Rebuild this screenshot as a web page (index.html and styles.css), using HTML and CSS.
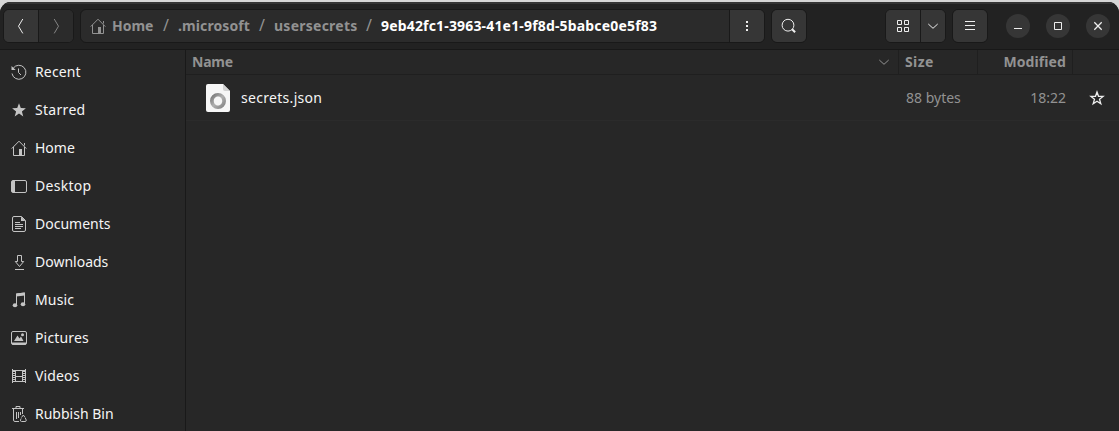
FILE: index.html
```html
<!DOCTYPE html>
<html lang="en">
<head>
<meta charset="utf-8">
<title>Files</title>
<link rel="stylesheet" href="styles.css">
</head>
<body>
<div class="window">
  <header class="bar">
    <div class="group nav">
      <button class="btn back"><svg width="16" height="16" viewBox="0 0 16 16"><path class="ln" d="M9.800 1L5.500 8.200L9.800 15.400"/></svg></button>
      <button class="btn fwd"><svg width="16" height="16" viewBox="0 0 16 16"><path class="ln" d="M6.200 1L10.500 8.200L6.200 15.400"/></svg></button>
    </div>
    <div class="group path">
      <div class="crumbs">
        <svg class="home" width="16" height="16" viewBox="0 0 16 16"><path class="ln" d="M.7 8.600L8 1.200L15.300 8.600M2.500 7V15.500H13.500V7M13.500 5.500V3"/><path class="fl" d="M8 9h3v6H8z"/></svg>
        <span class="c1">Home</span><i class="s1">/</i><span class="c2">.microsoft</span><i class="s2">/</i><span class="c3">usersecrets</span><i class="s3">/</i><span class="c4">9eb42fc1-3963-41e1-9f8d-5babce0e5f83</span>
      </div>
      <button class="btn more"><svg width="16" height="16" viewBox="0 0 16 16"><path class="fl" d="M7 3h2v2H7zM7 7h2v2H7zM7 11h2v2H7z"/></svg></button>
    </div>
    <div class="group search"><button class="btn"><svg width="16" height="16" viewBox="0 0 16 16"><circle class="ln" cx="7" cy="7.200" r="5.900"/><path class="ln thick" d="M11.100 11.300L14.100 14.300"/></svg></button></div>
    <div class="group view">
      <button class="btn grid"><svg width="16" height="16" viewBox="0 0 16 16"><path class="ln" d="M2.500 2.500h4v4h-4zM9.500 2.500h4v4h-4zM2.500 9.500h4v4h-4zM9.500 9.500h4v4h-4z"/></svg></button>
      <button class="btn drop"><svg width="16" height="16" viewBox="0 0 16 16"><path class="ln" d="M3.300 6L8 10.300L12.700 6"/></svg></button>
    </div>
    <div class="group menu"><button class="btn"><svg width="16" height="16" viewBox="0 0 16 16"><path class="ln" d="M3 3.500h10M3 7.500h10M3 11.500h10"/></svg></button></div>
    <div class="controls">
      <button class="round"><svg width="16" height="16" viewBox="0 0 16 16"><path class="ln" d="M4 10.500h8"/></svg></button>
      <button class="round"><svg width="16" height="16" viewBox="0 0 16 16"><path class="ln" d="M4.500 4.500h7v7h-7z"/></svg></button>
      <button class="round"><svg width="16" height="16" viewBox="0 0 16 16"><path class="ln mid" d="M4.300 4.300l7.400 7.400M11.700 4.300l-7.400 7.400"/></svg></button>
    </div>
  </header>
  <div class="body">
    <nav class="side">
      <a><svg width="16" height="16" viewBox="0 0 16 16"><path class="ln" d="M2.200 4.200A7 7 0 1 1 1 9.500M7.500 4.500V8.500L10 11"/><path class="fl" d="M.5 2v4h4.200z"/></svg><span class="t-recent">Recent</span></a>
      <a><svg width="16" height="16" viewBox="0 0 16 16"><path class="fl" d="M8 1.200l1.800 4.800 5.100.2-4 3.200 1.400 5L8 11.600l-4.300 2.800 1.400-5-4-3.200 5.100-.2z"/></svg><span class="t-starred">Starred</span></a>
      <a><svg width="16" height="16" viewBox="0 0 16 16"><path class="ln" d="M.7 8.600L8 1.200L15.300 8.600M2.500 7V15.500H13.500V7M13.500 5.500V3"/><path class="fl" d="M8 9h3v6H8z"/></svg><span class="t-home">Home</span></a>
      <a><svg width="16" height="16" viewBox="0 0 16 16"><rect class="ln" x=".5" y="2.500" width="15" height="12" rx="1.500"/><path class="fl" d="M1 3h3v11H1z"/></svg><span class="t-desktop">Desktop</span></a>
      <a><svg width="16" height="16" viewBox="0 0 16 16"><path class="ln" d="M3 .5h7.500l4 4V14q0 1.500-1.500 1.500H3Q1.500 15.500 1.500 14V2Q1.500 .5 3 .5zM4 6.500h5M4 8.500h8M4 10.500h8M4 12.500h6"/><path class="fl" d="M10 .5v4.500h4.500z"/></svg><span class="t-documents">Documents</span></a>
      <a><svg width="16" height="16" viewBox="0 0 16 16"><path class="ln" d="M6.500 1.500h4v6h2.200L8.500 12.500L4.300 7.500h2.200zM4 15.500h9"/></svg><span class="t-downloads">Downloads</span></a>
      <a><svg width="16" height="16" viewBox="0 0 16 16"><path class="ln" d="M5.500 13V2L13.500 1V12"/><path class="fl" d="M5 1.500L14 .5V3.500L5 4.500z"/><ellipse class="fl" cx="4" cy="13.300" rx="2.300" ry="2"/><ellipse class="fl" cx="12" cy="12.300" rx="2.300" ry="2"/></svg><span class="t-music">Music</span></a>
      <a><svg width="16" height="16" viewBox="0 0 16 16"><rect class="ln" x=".5" y="1.500" width="15" height="13" rx="1.500"/><path class="fl" d="M1 12.500h14v2H1zM3 11l3.500-5.500 2 3 1.500-2 2.500 4.500z"/><circle class="fl" cx="11.500" cy="4.800" r="1.500"/></svg><span class="t-pictures">Pictures</span></a>
      <a><svg width="16" height="16" viewBox="0 0 16 16"><path class="ln" d="M1.500 1v14M14.500 1v14M4.500 2v12M11.500 2v12M1 2.500h14M1 13.500h14M4 8.500h8"/><path class="ln dots" d="M3 3v11M13 3v11"/></svg><span class="t-videos">Videos</span></a>
      <a><svg width="16" height="16" viewBox="0 0 16 16"><path class="ln" d="M1 2.500h12M5 2V.5h4V2M2.500 3v11q0 1.500 1.500 1.500h4M11.500 3v5M5.500 6v7M7.500 6v6M9.500 6v3"/><path class="ln" d="M10.500 11.500l1.800-2.500 1.800 2.500M14.300 12l1 2.200q0 1.300-1.300 1.300h-3.500q-1.600-.3-1-1.600l.7-1.400"/></svg><span class="t-bin">Rubbish Bin</span></a>
    </nav>
    <main class="list">
      <div class="head">
        <div class="h-name"><span class="t-name">Name</span><svg width="16" height="16" viewBox="0 0 16 16"><path class="ln" d="M3.300 6L8 10.300L12.700 6"/></svg></div>
        <div class="h-size"><span class="t-size">Size</span></div>
        <div class="h-mod"><span class="t-mod">Modified</span></div>
        <div class="h-star"></div>
      </div>
      <div class="row">
        <svg class="file" width="24" height="28" viewBox="0 0 24 28"><defs><linearGradient id="g" x1="0" y1="0" x2="1" y2="1"><stop offset="0" stop-color="#666"/><stop offset=".5" stop-color="#b0b0b0"/><stop offset="1" stop-color="#777"/></linearGradient></defs><path fill="#f6f6f6" d="M2 0H17L24 7V26Q24 28 22 28H2Q0 28 0 26V2Q0 0 2 0z"/><path fill="#d2d2d2" d="M17 0V5Q17 7 19 7H24z"/><path fill="url(#g)" fill-rule="evenodd" d="M12 9a8 8 0 1 0 0 16a8 8 0 1 0 0-16zM12 12.500c3 0 4.200 2.500 4.200 4.500s-1.200 4.500-4.200 4.500-4.200-2.500-4.200-4.500 1.200-4.500 4.200-4.500z"/></svg>
        <span class="fname"><span class="t-file">secrets.json</span></span>
        <span class="fsize"><span class="t-bytes">88 bytes</span></span>
        <span class="fmod"><span class="t-time">18:22</span></span>
        <svg class="star" width="16" height="16" viewBox="0 0 16 16"><path class="ln mid" d="M8 2l1.500 4.300 4.600.1-3.600 2.900 1.300 4.500L8 11.200l-3.800 2.600 1.300-4.500L1.900 6.400l4.600-.1z"/></svg>
      </div>
    </main>
  </div>
</div>
</body>
</html>
```
FILE: styles.css
```css
* { box-sizing: border-box; }
body {
  margin: 0;
  height: 431px;
  padding-top: 2px;
  overflow: hidden;
  background: #d6d6d6;
  font-family: "Noto Sans", "Open Sans", sans-serif;
  font-size: 14px;
  color: #f5f5f5;
}
svg { display: block; flex: none; }
.ln { fill: none; stroke: currentColor; stroke-width: 1; }
.mid { stroke-width: 1.3; }
.thick { stroke-width: 2; }
.dots { stroke-dasharray: 1 1; stroke-width: 2; }
.fl { fill: currentColor; }
span, i { white-space: nowrap; }
.window {
  height: 429px;
  display: flex;
  flex-direction: column;
  overflow: hidden;
  border-radius: 11px 11px 0 0;
  background: #272727;
}
.bar {
  flex: none;
  height: 48px;
  padding: 5px 9px 0 3px;
  display: flex;
  border-top: 2px solid #353535;
  border-bottom: 1px solid #181818;
  background: #222;
}
.group {
  display: flex;
  height: 34px;
  border: 1px solid #191919;
  border-radius: 6px;
  overflow: hidden;
  background: #363636;
}
button {
  font: inherit;
  color: #eee;
  border: 0;
  padding: 0;
  background: #363636;
  display: flex;
  align-items: center;
  justify-content: center;
}
.btn { flex: 1; }
.nav { width: 71px; }
.fwd { color: #858585; background: #2b2b2b; border-left: 1px solid #191919; }
.path { width: 685px; margin-left: 6px; background: #2b2b2b; }
.crumbs {
  flex: 1;
  display: flex;
  align-items: center;
  padding-left: 9px;
  color: #929292;
  font-weight: bold;
}
.crumbs span, .crumbs i { padding-bottom: 2px; }
.crumbs i { font-style: normal; font-weight: normal; font-size: 16px; }
.c1 { margin-left: 6px; width: 42px; }
.c2 { width: 72px; letter-spacing: 0.1px; }
.c3 { width: 83px; letter-spacing: 0.25px; }
.s1, .s2, .s3 { width: 24px; text-align: center; }
.c4 { color: #fff; letter-spacing: 0.17px; }
.more { flex: none; width: 35px; border-left: 1px solid #191919; }
.search { width: 36px; margin-left: 6px; }
.view { width: 61px; margin-left: auto; }
.drop { flex: none; width: 25px; border-left: 1px solid #191919; }
.menu { width: 36px; margin-left: 6px; }
.controls { display: flex; gap: 16px; margin: 5px 0 0 18px; }
.round { width: 24px; height: 24px; border-radius: 50%; }
.body { flex: 1; min-height: 0; display: flex; }
.side {
  width: 186px;
  padding-top: 3px;
  border-right: 1px solid #191919;
  overflow: hidden;
}
.side a { display: flex; align-items: center; height: 38px; padding-left: 11px; gap: 8px; }
.side span { padding-bottom: 2px; }
.side svg { color: #c4c4c4; }
.t-recent, .t-pictures, .t-videos, .t-music { letter-spacing: 0.15px; }
.t-starred, .t-desktop { letter-spacing: 0.3px; }
.list { flex: 1; min-width: 0; }
.head {
  display: flex;
  height: 25px;
  border-bottom: 1px solid #1f1f1f;
  color: #929292;
  font-weight: bold;
}
.head > div { display: flex; align-items: center; border-right: 1px solid #1f1f1f; }
.head span { padding-bottom: 2px; }
.t-name { letter-spacing: -0.2px; }
.t-size { letter-spacing: 0.4px; }
.t-mod { letter-spacing: 0.1px; }
.head > .h-name { width: 713px; padding: 0 6px; justify-content: space-between; }
.head > .h-size { width: 79px; padding-left: 6px; }
.head > .h-mod { width: 95px; padding-right: 6px; justify-content: flex-end; }
.head > .h-star { flex: 1; border: 0; }
.row {
  display: flex;
  align-items: center;
  height: 46px;
  padding-left: 20px;
  border-bottom: 1px solid #2b2b2b;
  color: #929292;
}
.fname { width: 665px; margin-left: 11px; color: #f5f5f5; }
.t-file { letter-spacing: 0.3px; }
.fsize { width: 70px; }
.fmod { width: 90px; text-align: right; }
.star { margin-left: 23px; color: #eee; }
```
